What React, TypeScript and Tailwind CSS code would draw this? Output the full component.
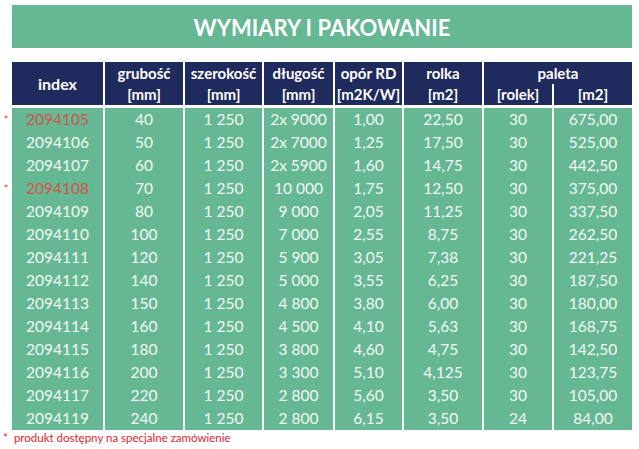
import React from 'react';

type Row = {
  index: string;
  special?: boolean;
  cells: string[];
};

const rows: Row[] = [
  { index: '2094105', special: true, cells: ['40', '1 250', '2x 9000', '1,00', '22,50', '30', '675,00'] },
  { index: '2094106', cells: ['50', '1 250', '2x 7000', '1,25', '17,50', '30', '525,00'] },
  { index: '2094107', cells: ['60', '1 250', '2x 5900', '1,60', '14,75', '30', '442,50'] },
  { index: '2094108', special: true, cells: ['70', '1 250', '10 000', '1,75', '12,50', '30', '375,00'] },
  { index: '2094109', cells: ['80', '1 250', '9 000', '2,05', '11,25', '30', '337,50'] },
  { index: '2094110', cells: ['100', '1 250', '7 000', '2,55', '8,75', '30', '262,50'] },
  { index: '2094111', cells: ['120', '1 250', '5 900', '3,05', '7,38', '30', '221,25'] },
  { index: '2094112', cells: ['140', '1 250', '5 000', '3,55', '6,25', '30', '187,50'] },
  { index: '2094113', cells: ['150', '1 250', '4 800', '3,80', '6,00', '30', '180,00'] },
  { index: '2094114', cells: ['160', '1 250', '4 500', '4,10', '5,63', '30', '168,75'] },
  { index: '2094115', cells: ['180', '1 250', '3 800', '4,60', '4,75', '30', '142,50'] },
  { index: '2094116', cells: ['200', '1 250', '3 300', '5,10', '4,125', '30', '123,75'] },
  { index: '2094117', cells: ['220', '1 250', '2 800', '5,60', '3,50', '30', '105,00'] },
  { index: '2094119', cells: ['240', '1 250', '2 800', '6,15', '3,50', '24', '84,00'] },
];

const cols = 'grid grid-cols-[91px_78px_77px_69px_67px_78px_68px_78px] gap-x-[2px]';

const HeadCell = ({ top, bottom }: { top: string; bottom: string }) => (
  <div className="row-span-2 bg-[#1f2a5d] flex flex-col items-center justify-center leading-[21px] pt-[1px]">
    <span>{top}</span>
    <span>{bottom}</span>
  </div>
);

export default function App() {
  return (
    <div className="w-[639px] h-[449px] bg-white pt-[5px] font-['Lato',sans-serif] overflow-hidden">
      {/* Title banner */}
      <div className="ml-[12px] w-[620px] h-[43px] bg-[#66b794] flex items-center justify-center">
        <h1 className="text-white font-bold text-[22px] pt-[2px]">WYMIARY I PAKOWANIE</h1>
      </div>

      {/* Table header */}
      <div className={`${cols} ml-[12px] mt-[14px] h-[43px] bg-white text-white font-bold text-[15px]`}>
        <div className="row-span-2 bg-[#1f2a5d] flex items-center justify-center text-[16px]">index</div>
        <HeadCell top="grubość" bottom="[mm]" />
        <HeadCell top="szerokość" bottom="[mm]" />
        <HeadCell top="długość" bottom="[mm]" />
        <HeadCell top="opór RD" bottom="[m2K/W]" />
        <HeadCell top="rolka" bottom="[m2]" />
        <div className="col-span-2 bg-[#1f2a5d] flex items-end justify-center leading-[21px] pt-[1px]">paleta</div>
        <div className="bg-[#1f2a5d] flex items-start justify-center leading-[21px]">[rolek]</div>
        <div className="bg-[#1f2a5d] flex items-start justify-center leading-[21px]">[m2]</div>
      </div>

      {/* Table body */}
      <div className="mt-[3px] flex flex-col gap-y-[2px]">
        {rows.map((r) => (
          <div key={r.index} className="flex h-[21px]">
            <div className="w-[12px] flex items-center justify-center text-[12px] text-[#e0534b] pt-[2px]">
              {r.special ? '*' : ''}
            </div>
            <div className={`${cols} text-[15.5px] text-[#f2f9f5]`}>
              <div className={`bg-[#66b794] flex items-center justify-center ${r.special ? 'text-[#d2554a]' : ''}`}>
                {r.index}
              </div>
              {r.cells.map((c, i) => (
                <div key={i} className="bg-[#66b794] flex items-center justify-center">
                  {c}
                </div>
              ))}
            </div>
          </div>
        ))}
      </div>

      {/* Footnote */}
      <p className="mt-[2px] pl-[3px] text-[11.5px] leading-[16px] text-[#e3242b]">
        <span className="mr-[6px]">*</span>produkt dostępny na specjalne zamówienie
      </p>
    </div>
  );
}
